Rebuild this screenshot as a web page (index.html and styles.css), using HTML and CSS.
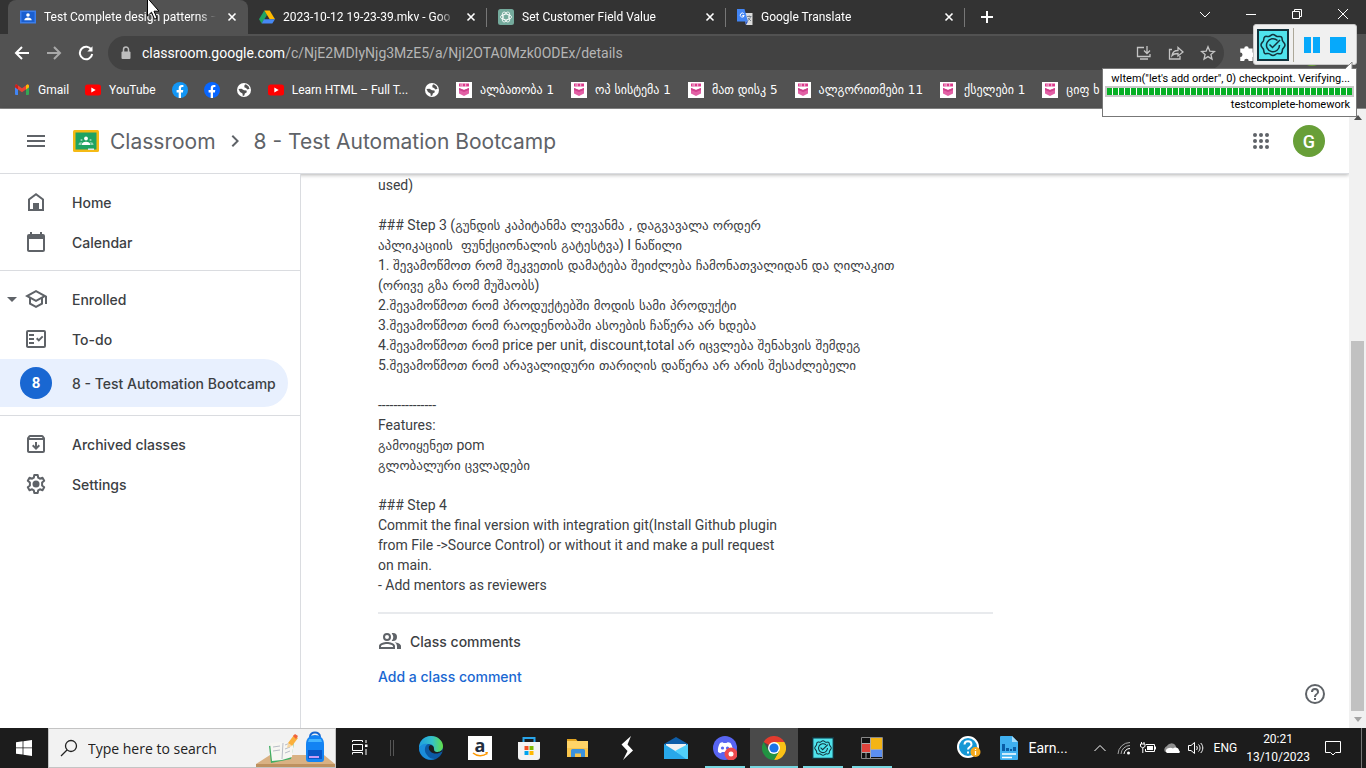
FILE: index.html
```html
<!DOCTYPE html>
<html lang="en">
<head>
<meta charset="utf-8">
<title>Test Complete design patterns</title>
<link rel="stylesheet" href="styles.css">
</head>
<body>
<svg class="defs" aria-hidden="true">
  <symbol id="close" viewBox="0 0 16 16"><path d="M4.500 4.500l7 7M11.500 4.500l-7 7" stroke="currentColor" stroke-width="1.600" fill="none"/></symbol>
  <symbol id="btu" viewBox="0 0 16 16"><path fill="#fff" d="M0 0h16v16H0z"/><path fill="#dc3a8c" d="M3 1.500h10v3H3z"/><path stroke="#fff" stroke-width=".7" d="M6.200 1.500v3M9.700 1.500v3M4 3h1.500"/><path fill="#e260a5" d="M3 6l5 2 5-2v5.500L8 14l-5-2.500z"/><path fill="#cf3f8b" d="M3 6l5 2 5-2v2L8 10 3 8z"/></symbol>
  <symbol id="yt" viewBox="0 0 16 16"><rect y="2.500" width="16" height="11" rx="2.500" fill="#f00"/><path fill="#fff" d="M6.300 5.500v5l4.400-2.500z"/></symbol>
  <symbol id="globe" viewBox="0 0 16 16"><circle cx="8" cy="8" r="7" fill="#fff"/><path fill="#525252" d="M2.500 7l3-.300 2.500 1.500 2.500.300.300 1.800-2 1.200-.500 2-1.500.5-.3-2.500L4 10zM8.500 3l1.300-.800 2.700 2 1 2.600-2 .6-1.500-1.500-1.700-.7z"/></symbol>
  <symbol id="fb" viewBox="0 0 16 16"><circle cx="8" cy="8" r="8" fill="currentColor"/><path fill="#fff" d="M6.700 16v-5.600H4.600V8h2.100V6.200c0-2.100 1.200-3.200 3.100-3.200.9 0 1.600.1 1.600.1v2h-1c-1 0-1.400.6-1.400 1.300V8h2.300l-.4 2.400H9V16z"/></symbol>
  <symbol id="seal" viewBox="0 0 32 32"><path fill="#4fe3ec" stroke="#12333d" stroke-width="2" d="M1 1h30v30H1z"/><g fill="none" stroke="#12333d" stroke-width="1.500"><path stroke-linejoin="round" d="M16 5.500c2 0 2 1.500 4 2s3-.7 4.300.3.500 3 1.400 4.300 2.300 2 2.300 3.900-1.400 2.500-2.300 4 .2 3-1.400 4.300-2.500-.3-4.300.3-2 1.900-4 1.900-2.200-1.300-4-1.900-3 .7-4.300-.3-.5-2.800-1.400-4.300S4 18 4 16s1.400-2.600 2.300-3.900-.1-3.100 1.400-4.300 2.300.2 4.300-.3 2-2 4-2z"/><path d="M20.500 11.500a6.500 6.500 0 1 0 2 4.500"/><path d="M12.500 15.500l3 3L23 11"/></g></symbol>
</svg>

<header class="browser">
  <nav class="tabs" aria-label="Tabs">
    <div class="tab tab-active">
      <svg class="fav" viewBox="0 0 16 16"><path fill="#3b7de9" d="M0 1.500h16v13H0z"/><path fill="#1a5fd0" d="M1.500 3h13v10h-13z"/><circle cx="8" cy="6" r="1.800" fill="#fff"/><path fill="#fff" d="M4.300 11.200c0-3.600 7.400-3.600 7.400 0z"/></svg>
      <button class="tab-title">Test Complete design patterns –</button><button class="icon-btn" aria-label="Close tab"><svg class="fav"><use href="#close"/></svg></button>
    </div>
    <div class="tab">
      <svg class="fav" viewBox="0 0 16 16"><path fill="#1fa463" d="M5.300 1.500L8 6 2.700 14.500 0 10.200z"/><path fill="#ffba00" d="M5.300 1.500h5.400L16 10.200h-5.300z"/><path fill="#4688f4" d="M5 10.200h11l-2.700 4.300H2.700z"/></svg>
      <button class="tab-title">2023-10-12 19-23-39.mkv - Goo</button><button class="icon-btn" aria-label="Close tab"><svg class="fav"><use href="#close"/></svg></button>
    </div>
    <div class="tab">
      <svg class="fav" viewBox="0 0 16 16"><rect width="16" height="16" rx="2.500" fill="#74aa9c"/><g fill="none" stroke="#fff" stroke-width=".8"><ellipse cx="8" cy="8" rx="5.500" ry="2.800"/><ellipse cx="8" cy="8" rx="5.500" ry="2.800" transform="rotate(60 8 8)"/><ellipse cx="8" cy="8" rx="5.500" ry="2.800" transform="rotate(120 8 8)"/></g></svg>
      <button class="tab-title">Set Customer Field Value</button><button class="icon-btn" aria-label="Close tab"><svg class="fav"><use href="#close"/></svg></button>
    </div>
    <div class="tab">
      <svg class="fav" viewBox="0 0 16 16"><path fill="#dcdcdc" d="M6 4h9.500v12H9z"/><path fill="#4285f4" d="M0 0h7.500l3.500 12.500H0z"/><path fill="#2a56c6" d="M8 12.500h3L9 16z"/><path d="M6.800 4.800a2 2 0 1 0 .4 1.700H5.300" stroke="#fff" stroke-width="1" fill="none"/><path d="M10 7.500h4.500M12.200 6.500v1M13.500 7.500c-.3 2-1.500 3.500-3 4.500M11 9l3 3" stroke="#707b85" stroke-width=".9" fill="none"/></svg>
      <button class="tab-title">Google Translate</button><button class="icon-btn" aria-label="Close tab"><svg class="fav"><use href="#close"/></svg></button>
    </div>
    <button class="new-tab" aria-label="New tab"><svg class="fav" viewBox="0 0 16 16"><path d="M8 2v12M2 8h12" stroke="#fff" stroke-width="2"/></svg></button>
    <div class="win-controls">
      <button aria-label="Search tabs"><svg viewBox="0 0 12 12"><path d="M1 4l5 5 5-5"/></svg></button>
      <button aria-label="Minimize"><svg viewBox="0 0 12 12"><path d="M1 6.500h10"/></svg></button>
      <button aria-label="Restore"><svg viewBox="0 0 12 12"><path d="M1.500 3.500h7v7h-7zM3.500 3V1.500h7v7H9"/></svg></button>
      <button aria-label="Close"><svg viewBox="0 0 12 12"><path d="M1 1l10 10M11 1L1 11"/></svg></button>
    </div>
  </nav>
  <div class="toolbar">
    <button class="nav-btn" aria-label="Back"><svg viewBox="0 0 16 16"><path d="M15 8H2M8 2L2 8l6 6"/></svg></button>
    <button class="nav-btn nav-off" aria-label="Forward"><svg viewBox="0 0 16 16"><path d="M1 8h13M8 2l6 6-6 6"/></svg></button>
    <button class="nav-btn" aria-label="Reload"><svg viewBox="0 0 16 16"><path d="M13.500 5A6.200 6.200 0 1 0 14.200 9"/><path d="M14.500 1.200v5.300H9.300z" fill="#fff" stroke="none"/></svg></button>
    <div class="omnibox">
      <svg class="lock" viewBox="0 0 16 16"><rect x="3.500" y="6.500" width="9" height="7.500" rx="1" fill="#bdbdbd"/><path d="M5.500 7V4.500a2.500 2.500 0 0 1 5 0V7" fill="none" stroke="#bdbdbd" stroke-width="1.500"/></svg>
      <a class="url" href="#"><b>classroom.google.com</b>/c/NjE2MDIyNjg3MzE5/a/NjI2OTA0Mzk0ODEx/details</a>
      <button class="omni-btn" aria-label="Install"><svg viewBox="0 0 16 16"><path d="M8 2.500H1.500v9H14V9M4 14h8M11 1v7M8 5.500l3 3 3-3"/></svg></button>
      <button class="omni-btn" aria-label="Share"><svg viewBox="0 0 16 16"><path d="M4 4.500H1.500v9.500H12v-3M4 10.500c.5-3.500 3-5 6-5v-3L15 7l-5 4V8.500c-3 0-4.800.5-6 2z"/></svg></button>
      <button class="omni-btn" aria-label="Bookmark"><svg viewBox="0 0 16 16"><path d="M8 1.800l1.800 4.300 4.700.4-3.600 3 1.100 4.600L8 11.600l-4 2.500 1.100-4.600-3.600-3 4.700-.4z"/></svg></button>
    </div>
    <button class="ext" aria-label="Extensions"><svg viewBox="0 0 16 16"><path fill="#fff" d="M2 4h3.500a2 2 0 1 1 4 0H13v3.500a2 2 0 1 1 0 4V15H9.500a2 2 0 0 0-4 0H2v-3.500a2 2 0 0 0 0-4z"/></svg></button>
    <span class="profile"></span>
  </div>
  <nav class="bookmarks" aria-label="Bookmarks">
    <a href="#"><svg class="fav" viewBox="0 0 16 16"><path fill="#4285f4" d="M1 4l3 2.300V13H2a1 1 0 0 1-1-1z"/><path fill="#34a853" d="M15 4l-3 2.300V13h2a1 1 0 0 0 1-1z"/><path fill="#ea4335" d="M1 4c0-1.300 1.400-1.900 2.400-1.100L8 6.300l4.600-3.400C13.600 2.100 15 2.700 15 4v1.300l-7 5-7-5z"/><path fill="#c5221f" d="M1 4c0-1.300 1.400-1.900 2.400-1.100L4 3.300v4.200L1 5.300z"/><path fill="#fbbc04" d="M15 4c0-1.300-1.400-1.900-2.400-1.100l-.6.400v4.200l3-2.200z"/></svg>Gmail</a>
    <a href="#"><svg class="fav"><use href="#yt"/></svg>YouTube</a>
    <a href="#" aria-label="Facebook"><svg class="fav fb-light"><use href="#fb"/></svg></a>
    <a href="#" aria-label="Facebook"><svg class="fav fb-dark"><use href="#fb"/></svg></a>
    <a href="#" aria-label="Site"><svg class="fav"><use href="#globe"/></svg></a>
    <a href="#"><svg class="fav"><use href="#yt"/></svg>Learn HTML – Full T...</a>
    <a href="#" aria-label="Site"><svg class="fav"><use href="#globe"/></svg></a>
    <a href="#"><svg class="fav"><use href="#btu"/></svg><span class="ka">ალბათობა 1</span></a>
    <a href="#"><svg class="fav"><use href="#btu"/></svg><span class="ka">ოპ სისტემა 1</span></a>
    <a href="#"><svg class="fav"><use href="#btu"/></svg><span class="ka">მათ დისკ 5</span></a>
    <a href="#"><svg class="fav"><use href="#btu"/></svg><span class="ka">ალგორითმები 11</span></a>
    <a href="#"><svg class="fav"><use href="#btu"/></svg><span class="ka">ქსელები 1</span></a>
    <a href="#"><svg class="fav"><use href="#btu"/></svg><span class="ka">ციფ ხ</span></a>
  </nav>
</header>

<div class="viewport">
  <div class="page">
    <header class="app-bar">
      <button class="menu" aria-label="Main menu"><svg class="ico" viewBox="0 0 24 24"><path d="M3 18h18v-2H3zm0-5h18v-2H3zm0-7v2h18V6z"/></svg></button>
      <svg class="logo" viewBox="0 0 26 22"><rect width="26" height="22" rx="1.500" fill="#f5ba15"/><path fill="#1ea362" d="M2.500 2.500h21v17h-21z"/><circle cx="13" cy="8.500" r="1.900" fill="#fff"/><path fill="#fff" d="M8.500 15c0-4.500 9-4.500 9 0z"/><g fill="#8fd1b0"><circle cx="8.500" cy="10" r="1.100"/><circle cx="17.500" cy="10" r="1.100"/><path d="M5.500 15c0-2.500 1.500-3 3.500-2.700L8 15zM20.500 15c0-2.500-1.500-3-3.500-2.700l1 2.700z"/></g><path fill="#e6e6e6" d="M15 18.500h6v1.500h-6z"/></svg>
      <a class="crumb" href="#">Classroom</a>
      <svg class="ico" viewBox="0 0 24 24"><path d="M8.600 16.600L13.200 12 8.600 7.400 10 6l6 6-6 6z"/></svg>
      <a class="crumb" href="#">8 - Test Automation Bootcamp</a>
      <button class="apps" aria-label="Google apps"><svg class="ico" viewBox="0 0 24 24"><circle cx="6" cy="6" r="2"/><circle cx="12" cy="6" r="2"/><circle cx="18" cy="6" r="2"/><circle cx="6" cy="12" r="2"/><circle cx="12" cy="12" r="2"/><circle cx="18" cy="12" r="2"/><circle cx="6" cy="18" r="2"/><circle cx="12" cy="18" r="2"/><circle cx="18" cy="18" r="2"/></svg></button>
      <button class="avatar">G</button>
    </header>
    <div class="columns">
      <nav class="side" aria-label="Classroom">
        <ul>
          <li><a href="#"><svg class="ico" viewBox="0 0 24 24"><path fill="none" stroke="#5f6368" stroke-width="2" d="M5 20V9.500l7-5.300 7 5.300V20z"/><path d="M9 13h6v7H9z"/></svg>Home</a></li>
          <li><a href="#"><svg class="ico" viewBox="0 0 24 24"><path d="M19 4h-1V2h-2v2H8V2H6v2H5a2 2 0 0 0-2 2v14c0 1.100.9 2 2 2h14a2 2 0 0 0 2-2V6a2 2 0 0 0-2-2zm0 16H5V9h14z"/></svg>Calendar</a></li>
        </ul>
        <ul>
          <li class="parent"><svg class="caret" viewBox="0 0 10 5"><path d="M0 0h10L5 5z"/></svg><a href="#"><svg class="ico" viewBox="0 0 24 24"><path d="M12 3L1 9l4 2.200v6L12 21l7-3.800v-6l2-1.100V17h2V9zm6.800 6L12 12.700 5.200 9 12 5.300zM17 16l-5 2.700L7 16v-3.700l5 2.700 5-2.700z"/></svg>Enrolled</a></li>
          <li><a href="#"><svg class="ico" viewBox="0 0 24 24"><path d="M20 3H4a2 2 0 0 0-2 2v14c0 1.100.9 2 2 2h16a2 2 0 0 0 2-2V5a2 2 0 0 0-2-2zm0 16H4V5h16z"/><path d="M19.400 10.100L18 8.700l-3.200 3.200-1.400-1.400-1.400 1.400 2.800 2.800zM5 7h5v2H5zm0 4h5v2H5zm0 4h5v2H5z"/></svg>To-do</a></li>
          <li class="current"><a href="#" aria-current="page"><span class="badge">8</span>8 - Test Automation Bootcamp</a></li>
        </ul>
        <ul>
          <li><a href="#"><svg class="ico" viewBox="0 0 24 24"><path d="M20.500 5.200l-1.300-1.600A1.500 1.500 0 0 0 18 3H6c-.5 0-.9.200-1.200.6L3.500 5.200C3.200 5.600 3 6 3 6.500V19c0 1.100.9 2 2 2h14a2 2 0 0 0 2-2V6.500c0-.5-.2-.9-.5-1.300zM6.200 5h11.600l.8 1H5.400zM5 19V8h14v11z"/><path d="M8 14l4 4 4-4-1.400-1.400-1.600 1.600V10h-2v4.200l-1.600-1.600z"/></svg>Archived classes</a></li>
          <li><a href="#"><svg class="ico" viewBox="0 0 24 24"><path fill="none" stroke="#5f6368" stroke-width="2" stroke-linejoin="round" d="M10.300 3h3.400l.5 2.700 1.700 1 2.600-.9 1.700 2.900-2.100 1.800v2.900l2.100 1.900-1.700 2.900-2.600-.9-1.700 1-.5 2.700h-3.400l-.5-2.700-1.700-1-2.600.9-1.700-2.900 2.100-1.800v-3L3.800 8.700l1.700-2.900 2.600.9 1.700-1z"/><circle cx="12" cy="12" r="3.500"/></svg>Settings</a></li>
        </ul>
      </nav>
      <main class="post">
        <div class="body">used)<br><br>### Step 3 (<span class="ka">გუნდის კაპიტანმა ლევანმა , დაგვავალა ორდერ</span><br><span class="ka">აპლიკაციის&nbsp; ფუნქციონალის გატესტვა</span>) I <span class="ka">ნაწილი</span><br>1. <span class="ka">შევამოწმოთ რომ შეკვეთის დამატება შეიძლება ჩამონათვალიდან და ღილაკით</span><br>(<span class="ka">ორივე გზა რომ მუშაობს</span>)<br>2.<span class="ka">შევამოწმოთ რომ პროდუქტებში მოდის სამი პროდუქტი</span><br>3.<span class="ka">შევამოწმოთ რომ რაოდენობაში ასოების ჩაწერა არ ხდება</span><br>4.<span class="ka">შევამოწმოთ რომ</span> price per unit, discount,total <span class="ka">არ იცვლება შენახვის შემდეგ</span><br>5.<span class="ka">შევამოწმოთ რომ არავალიდური თარიღის დაწერა არ არის შესაძლებელი</span><br><br>---------------<br>Features:<br><span class="ka">გამოიყენეთ</span> pom<br><span class="ka">გლობალური ცვლადები</span><br><br>### Step 4<br>Commit the final version with integration git(Install Github plugin<br>from File -&gt;Source Control) or without it and make a pull request<br>on main.<br>- Add mentors as reviewers</div>
        <section class="comments">
          <h2><svg class="ico" viewBox="0 0 24 24"><path fill-rule="evenodd" d="M9 12a4 4 0 1 0 0-8 4 4 0 0 0 0 8zm0-6a2 2 0 1 1 0 4 2 2 0 0 1 0-4zm0 7c-2.700 0-8 1.300-8 4v3h16v-3c0-2.700-5.300-4-8-4zm6 5H3v-1c0-.7 3.200-2 6-2s6 1.300 6 2z"/><path d="M15 12a4 4 0 0 0 0-8c-.5 0-.9.100-1.300.2a5.900 5.900 0 0 1 0 7.600c.4.100.8.200 1.300.2zM16.700 13.200A4.800 4.800 0 0 1 19 17v3h4v-3c0-2.100-3.300-3.400-6.300-3.800z"/></svg>Class comments</h2>
          <button class="add">Add a class comment</button>
        </section>
        <button class="help" aria-label="Help"><svg class="ico" viewBox="0 0 24 24"><path d="M11 18h2v-2h-2zm1-16a10 10 0 1 0 0 20 10 10 0 0 0 0-20zm0 18a8 8 0 1 1 0-16 8 8 0 0 1 0 16zm0-14a4 4 0 0 0-4 4h2a2 2 0 1 1 4 0c0 2-3 1.800-3 5h2c0-2.200 3-2.500 3-5a4 4 0 0 0-4-4z"/></svg></button>
      </main>
    </div>
  </div>
  <div class="scrollbar"><svg class="arrow" viewBox="0 0 8 5"><path fill="#505050" d="M4 0l4 5H0z"/></svg><span class="thumb"></span><svg class="arrow" viewBox="0 0 8 5"><path fill="#a3a3a3" d="M0 0h8L4 5z"/></svg></div>
</div>

<footer class="taskbar">
  <button class="task" aria-label="Start"><svg class="start" viewBox="0 0 16 16"><path fill="#fff" d="M0 2.200l6.600-.9v6.200H0zM7.400 1.200L16 0v7.500H7.400zM0 8.300h6.600v6.300L0 13.700zM7.400 8.300H16V16l-8.600-1.200z"/></svg></button>
  <label class="search"><svg viewBox="0 0 18 18"><circle cx="11" cy="7" r="5.500" fill="none" stroke="#222" stroke-width="1.300"/><path d="M7 11l-6 6" stroke="#222" stroke-width="1.300"/></svg><input type="text" placeholder="Type here to search" aria-label="Type here to search">
    <svg class="art" viewBox="0 0 79 37"><path fill="#d9b183" d="M14 25h54l11 9H0z"/><path fill="#bd915f" d="M0 34h79v3H0z"/><path fill="#3fae63" d="M13 16l13-2 12-1-3 16-20 4z"/><path fill="#f7f6f2" d="M14 13l11-1 3 1 10-3-2 17-10 3-10 1z"/><path d="M27 13l-1 16M17 17l7-1M17 21l7-1M29 15l5-2M29 19l5-2M29 23l5-2" stroke="#b9bdc6" fill="none"/><path fill="#fbb03b" d="M32 13l6-8 4 3-6 8z"/><path fill="#f0643c" d="M37 6l2-2 3 2-2 3z"/><path fill="#f7d6a0" d="M32 13l4 3-5 2z"/><path d="M54 7c0-6 10-6 10 0" fill="none" stroke="#1766d0" stroke-width="2"/><path fill="#1383f3" d="M50 14c0-12 18-12 18 0v15a3 3 0 0 1-3 3H53a3 3 0 0 1-3-3z"/><path fill="#0a57c8" d="M52 20h14v9H52z"/><path fill="#45b4ff" d="M53 9h12l1 3H52z"/><path fill="#c79af5" d="M53 26h10v2H53z"/></svg>
  </label>
  <button class="task" aria-label="Task view"><svg class="view" viewBox="0 0 16 16"><path d="M.5 2V.500h10V2M.5 4.500h10v6H.5zM.5 14.500v-2h10v2M14 0v3M14 9v6" fill="none" stroke="#fff"/><path fill="#fff" d="M13 4.500h2.500V7H13z"/></svg></button>
  <span class="grip"></span>
  <div class="apps-row">
    <button class="task" aria-label="Edge"><svg viewBox="0 0 24 24"><defs><linearGradient id="eg"><stop stop-color="#1f9fe0"/><stop offset=".55" stop-color="#35c1c9"/><stop offset="1" stop-color="#62df45"/></linearGradient></defs><circle cx="12" cy="12" r="12" fill="#0c59a4"/><path fill="url(#eg)" d="M0 12C0 5 5 0 12 0s12 5 12 10c0 4-3 6-6 6s-4-1-3-3c0-4-3-5-6-5-4 0-7 2-9 4z"/><path fill="#1b8ddb" d="M0 12c2-4 6-5 9-4-4 2-4 8-1 11 2 3 5 4 8 4C8 26 0 20 0 12z"/><path fill="#1c1c1c" d="M15 13c0-3-2-4-3.500-4-2 1-2.500 4 0 6.500 3 3 8 2.500 11.500 0L24 13c-2 3-5 3-6.500 3S15 15 15 13z"/></svg></button>
    <button class="task" aria-label="Amazon"><svg class="amazon" viewBox="0 0 24 24"><path fill="#fff" d="M0 0h24v24H0z"/><text x="12" y="16" text-anchor="middle" class="amz">a</text><path d="M5 17c4 3.500 10 3.500 14 .5" stroke="#f90" stroke-width="1.500" fill="none"/><path fill="#f90" d="M17 16h3l-1 3z"/></svg></button>
    <button class="task" aria-label="Microsoft Store"><svg viewBox="0 0 24 24"><path d="M6.500 6V2h11v4" fill="none" stroke="#29a5ea" stroke-width="2"/><path fill="#f3f3f3" d="M1 6h22v15a3 3 0 0 1-3 3H4a3 3 0 0 1-3-3z"/><path fill="#f25022" d="M7.500 10h4v4h-4z"/><path fill="#7fba00" d="M12.500 10h4v4h-4z"/><path fill="#00a4ef" d="M7.500 15h4v4h-4z"/><path fill="#ffb900" d="M12.500 15h4v4h-4z"/></svg></button>
    <button class="task" aria-label="File Explorer"><svg viewBox="0 0 24 24"><path fill="#e0a321" d="M1 3h9l1.500 2H1z"/><path fill="#ffd467" d="M1 5h21v16H1z"/><path fill="#f8c44b" d="M1 12h21v9H1z"/><path fill="#3a91dd" d="M5 21v-6.500a1.500 1.500 0 0 1 1.500-1.500h11a1.500 1.500 0 0 1 1.500 1.500V21h-4v-3.500H9V21z"/></svg></button>
    <button class="task" aria-label="Shortcut app"><svg viewBox="0 0 24 24"><path fill="#fff" d="M16 0L6.500 8.500l6 6.500L8 24l10-9.500-5.500-6z"/></svg></button>
    <button class="task" aria-label="Mail"><svg viewBox="0 0 24 24"><path fill="#0f5ea8" d="M0 8l12-7 12 7v4H0z"/><path fill="#f2f2f2" d="M2 8h20v6l-10 5-10-5z"/><path fill="#28a8ea" d="M0 8l24 15H0z"/><path fill="#50d0fb" d="M24 8v15H22L11 15z"/></svg></button>
    <button class="task running" aria-label="Discord"><svg viewBox="0 0 24 24"><circle cx="12" cy="12" r="12" fill="#5865f2"/><path fill="#fff" d="M7 7c2-1 3-1 3.500 0h3c.5-1 2-1 4 0 2 3 2.500 6 2 9-2 1.500-3 1.500-3.500 0h-7c-1 1.500-2 1.500-4 0C4.500 12.500 5.500 9.500 7 7z"/><circle cx="9.500" cy="12" r="1.600" fill="#5865f2"/><circle cx="14.500" cy="12" r="1.600" fill="#5865f2"/><circle cx="18" cy="18" r="6.500" fill="#ed4a4e"/><circle cx="18" cy="18" r="2.500" fill="#fff"/></svg></button>
    <button class="task focused" aria-label="Chrome"><svg viewBox="0 0 24 24"><path fill="#e33b2e" d="M12 12L1.600 6A12 12 0 0 1 22.400 6z"/><path fill="#fbc116" d="M12 12V6h10.400A12 12 0 0 1 12 24l5-9z"/><path fill="#229342" d="M1.600 6A12 12 0 0 0 12 24l5.200-9L12 12 6.800 15z"/><circle cx="12" cy="12" r="6" fill="#fff"/><circle cx="12" cy="12" r="4.600" fill="#1a73e8"/></svg></button>
    <button class="task running" aria-label="TestComplete"><svg class="seal-small"><use href="#seal"/></svg></button>
    <button class="task running" aria-label="Orders"><svg viewBox="0 0 24 24"><path fill="#111" stroke="#888" d="M1.500 1.500h21v21h-21z"/><path fill="#e0433c" d="M2 8h8v8H2z"/><path fill="#f3b415" d="M11 2h11v11H11z"/><path fill="#5c8ff0" d="M11 14h11v7H11z"/><path d="M10.500 2v20M2 16.500h8M6 17v5M2 7.500h8M11 13.500h11" stroke="#aaa"/></svg></button>
  </div>
  <div class="tray">
    <button class="tray-help" aria-label="Get help"><svg viewBox="0 0 24 24"><circle cx="11" cy="11" r="10" fill="#1597d5" stroke="#fff" stroke-width="2"/><path d="M7.500 8.500c0-4.500 7-4.500 7 0 0 2.500-3.500 2.500-3.500 5M11 15.500v2" stroke="#fff" stroke-width="2" fill="none"/><circle cx="18.500" cy="16" r="5" fill="#f5a81c"/><path d="M18.500 13v1M18.500 15v4" stroke="#fff" stroke-width="1.300"/></svg></button>
    <button class="news"><svg viewBox="0 0 18 24"><path fill="#3fb0f0" d="M1 0h11l6 6v17a1 1 0 0 1-1 1H1a1 1 0 0 1-1-1V1a1 1 0 0 1 1-1z"/><path fill="#a5dcfa" d="M12 0l6 6h-6z"/><path fill="#0a5da6" d="M2 8h3v7H2zM6 12h3v3H6zM10 13h2v2h-2zM13 11h3v4h-3z"/><path stroke="#fff" stroke-width="1.500" d="M2 18h14M2 21.500h10"/></svg>Earn...</button>
    <button class="tray-ico" aria-label="Show hidden icons"><svg viewBox="0 0 16 16"><path d="M2.500 11L8 5.500l5.500 5.500"/></svg></button>
    <button class="tray-ico" aria-label="Network"><svg viewBox="0 0 16 16"><path stroke="#a9a9a9" d="M2 14A12 12 0 0 1 14 2.500M5 14a9 9 0 0 1 9-8.500"/><path d="M8 14a6 6 0 0 1 6-5.500"/><circle cx="12.500" cy="13" r="1.500" fill="#fff" stroke="none"/></svg></button>
    <button class="tray-ico" aria-label="Battery"><svg viewBox="0 0 16 16"><path d="M6 4.500h8.500v7h-9V9M15.500 6.500v3M1.500 2v2M4 2v2M.5 4h4.500v2.500l-2.200 1.300L.500 6.500zM2.800 8v5"/><path fill="#fff" stroke="none" d="M7 6h6v4H7z"/></svg></button>
    <button class="tray-ico" aria-label="OneDrive"><svg viewBox="0 0 16 16"><path fill="#8f8f8f" stroke="none" d="M1 12a4 4 0 0 1 2-6 5 5 0 0 1 8.500-.5L13 9z"/><path fill="#fff" stroke="none" d="M3 13a2.700 2.700 0 0 1 1-4.800c2-1 4-.5 5 .3 2-2 6-.500 6 2 1.500.8.800 2.500-.5 2.500z"/></svg></button>
    <button class="tray-ico" aria-label="Volume"><svg viewBox="0 0 16 16"><path d="M.5 5.500H3L6.500 2.500v11L3 10.500H.5zM8.500 6c1 1.200 1 2.800 0 4M10.500 4.500c2 2 2 5 0 7M12.700 3c2.800 3 2.800 7 0 10"/></svg></button>
    <button class="lang">ENG</button>
    <button class="clock"><time>20:21</time><time>13/10/2023</time></button>
    <button class="notes" aria-label="Notifications"><svg viewBox="0 0 18 18"><path d="M1.500 2.500h15v11h-5L9 16l-2.500-2.500h-5z"/></svg></button>
    <span class="desktop-edge"></span>
  </div>
</footer>

<aside class="runner">
  <div class="runner-bar">
    <svg class="seal"><use href="#seal"/></svg>
    <span class="runner-sep"></span>
    <button aria-label="Pause"><svg viewBox="0 0 16 16"><path fill="#06a9fb" d="M0 0h7v16H0zM9 0h7v16H9z"/></svg></button>
    <button aria-label="Stop"><svg viewBox="0 0 16 16"><path fill="#06a9fb" d="M0 0h16v16H0z"/></svg></button>
  </div>
  <div class="runner-tip" role="status">
    <svg class="tail" viewBox="0 0 8 8"><path fill="#fff" d="M7 0v8H0z"/><path d="M0 8l7-7v7" stroke="#888" fill="none"/></svg>
    <p>wItem("let's add order", 0) checkpoint. Verifying...</p>
    <div class="progress"></div>
    <p>testcomplete-homework</p>
  </div>
</aside>

<svg class="pointer" viewBox="0 0 12 22"><path fill="#fff" stroke="#000" d="M.500-2v18l4-3.800 3 7 2.500-1-3-7h5z"/></svg>
</body>
</html>
```
FILE: styles.css
```css
* { box-sizing: border-box; }
body {
  margin: 0;
  height: 100vh;
  display: flex;
  flex-direction: column;
  overflow: hidden;
  position: relative;
  font-family: Roboto, "DejaVu Sans", sans-serif;
  font-size: 12px;
  background: #fff;
}
button {
  border: 0;
  padding: 0;
  background: none;
  font: inherit;
  color: inherit;
  display: flex;
  align-items: center;
  justify-content: center;
  flex: none;
}
a { color: inherit; text-decoration: none; }
svg { flex: none; display: block; }
ul, p, h2 { margin: 0; padding: 0; list-style: none; }
.defs { position: absolute; width: 0; height: 0; }
.fav { width: 16px; height: 16px; }
.ka { font-family: "DejaVu Sans", sans-serif; }

/* Browser chrome */
.browser { flex: none; color: #fff; background: #525252; border-bottom: 1px solid #8a8a8a; }
.tabs { display: flex; height: 34px; padding-left: 8px; background: #333; }
.tab {
  display: flex;
  align-items: center;
  flex: 0 1 239px;
  min-width: 0;
  gap: 8px;
  padding: 0 8px 0 11px;
  position: relative;
}
.tab:not(.tab-active)::after {
  content: "";
  position: absolute;
  right: 0;
  top: 8px;
  height: 19px;
  width: 1px;
  background: #777;
}
.tab-active { flex-basis: 240px; padding-left: 12px; background: #525252; border-radius: 8px 8px 0 0; }
.tab-title {
  flex: 1;
  min-width: 0;
  justify-content: flex-start;
  white-space: nowrap;
  mask-image: linear-gradient(to right, #000 90%, transparent);
}
.new-tab { width: 44px; }
.win-controls { display: flex; margin-left: auto; }
.win-controls button { width: 46px; height: 28px; }
.win-controls svg { width: 12px; height: 12px; fill: none; stroke: #fff; }
.toolbar { display: flex; align-items: center; height: 38px; padding: 0 8px; }
.nav-btn { width: 28px; margin-right: 4px; }
.nav-btn svg { width: 16px; height: 16px; fill: none; stroke: #fff; stroke-width: 2; }
.nav-off { opacity: .5; }
.omnibox {
  flex: 1;
  display: flex;
  align-items: center;
  height: 34px;
  margin-left: 4px;
  padding: 0 0 0 8px;
  border-radius: 17px;
  background: #424242;
}
.lock { width: 16px; height: 16px; margin: 0 8px 0 2px; }
.url { flex: 1; font-size: 14px; color: #b5b5b5; }
.url b { font-weight: 400; color: #fff; }
.omni-btn { width: 32px; }
.omni-btn svg { width: 16px; height: 16px; fill: none; stroke: #c4c4c4; stroke-width: 1.3; }
.ext { margin-left: 14px; }
.ext svg { width: 18px; height: 18px; }
.profile { width: 26px; height: 26px; margin: 0 33px 0 43px; border-radius: 50%; background: #689f38; }
.bookmarks { display: flex; align-items: center; gap: 16px; height: 36px; padding: 0 14px; overflow: hidden; }
.bookmarks a { display: flex; align-items: center; gap: 8px; white-space: nowrap; }
.bookmarks .ka { margin-right: 1px; }
.fb-light { color: #1296f5; }
.fb-dark { color: #0866ff; }

/* Web page */
.viewport { flex: 1; min-height: 0; display: flex; }
.page { flex: 1; min-width: 0; display: flex; flex-direction: column; color: #3c4043; font-family: Inter, sans-serif; }
.ico { width: 24px; height: 24px; fill: #5f6368; }
.app-bar {
  flex: none;
  display: flex;
  align-items: center;
  height: 65px;
  padding: 0 24px;
  border-bottom: 1px solid #dadce0;
  box-shadow: 0 1px 4px rgba(0, 0, 0, .3);
}
.logo { width: 26px; height: 22px; margin: 0 11px 0 25px; }
.crumb { font-size: 21px; color: #5f6368; }
.crumb + .ico { margin: 0 7px; }
.apps { margin-left: auto; }
.avatar {
  width: 32px;
  height: 32px;
  margin-left: 20px;
  border-radius: 50%;
  background: #689f38;
  color: #fff;
  font: 500 18px Roboto, sans-serif;
}
.columns { flex: 1; min-height: 0; display: flex; overflow: hidden; }
.side {
  flex: none;
  width: 301px;
  border-right: 1px solid #dadce0;
  background: #fff;
  font-size: 14px;
  font-weight: 500;
  position: relative;
}
.side ul { padding: 8px 0; }
.side ul + ul { border-top: 1px solid #dadce0; }
.side a { display: flex; align-items: center; gap: 24px; height: 40px; padding-left: 24px; }
.side li { position: relative; margin-right: 12px; }
.side .current a { gap: 20px; height: 48px; padding-left: 20px; background: #e8f0fe; border-radius: 0 24px 24px 0; white-space: nowrap; }
.caret { position: absolute; left: 7px; top: 18px; width: 10px; height: 5px; fill: #5f6368; }
.badge {
  width: 32px;
  height: 32px;
  border-radius: 50%;
  background: #1967d2;
  color: #fff;
  font: 700 15px/32px Roboto, sans-serif;
  text-align: center;
}
.post { flex: 1; min-width: 0; padding: 1px 77px 0; position: relative; }
.body { font: 14px/20px Roboto, "DejaVu Sans", sans-serif; white-space: nowrap; }
.body .ka { font-size: 13px; line-height: 1; }
.comments { max-width: 615px; margin-top: 17px; border-top: 2px solid #e8eaed; }
.comments h2 { display: flex; align-items: center; gap: 8px; padding-top: 15px; font-size: 14px; font-weight: 500; }
.add { height: 36px; margin-top: 5px; font-size: 14px; font-weight: 500; color: #1967d2; }
.help { position: absolute; right: 22px; bottom: 22px; }
.scrollbar { flex: none; width: 17px; display: flex; flex-direction: column; align-items: center; padding: 6px 0; background: #f1f1f1; }
.arrow { width: 8px; height: 5px; }
.thumb { width: 13px; height: 61%; margin: auto 0 6px; background: #c1c1c1; }

/* Taskbar */
.taskbar { flex: none; display: flex; height: 40px; background: #1c1c1c; color: #fff; }
.task { width: 48px; border-bottom: 2px solid transparent; padding-top: 2px; }
.task svg { width: 24px; height: 24px; }
.task .start, .task .view { width: 16px; height: 16px; }
.task .seal-small { width: 22px; height: 22px; }
.task .amazon { overflow: visible; }
.amz { font: 700 18px "Open Sans", sans-serif; fill: #232f3e; }
.running { border-bottom-color: #76d6e0; width: 40px; margin: 0 4px; }
.focused { border-bottom-color: #76d6e0; background: #4a4a4a; }
.search { display: flex; align-items: center; width: 288px; padding-left: 11px; background: #f2f2f2; border: 1px solid #c4c4c4; }
.search > svg:first-child { width: 18px; height: 18px; }
.search input {
  flex: 1;
  min-width: 0;
  margin-left: 10px;
  padding: 0;
  border: 0;
  background: none;
  font: 14px "Open Sans", sans-serif;
  color: #222;
}
.search input::placeholder { color: #222; opacity: 1; }
.search .art { width: 79px; height: 37px; }
.grip { width: 4px; height: 16px; margin: 12px 13px 0 6px; border: solid #555; border-width: 0 1px; }
.apps-row { display: flex; gap: 1px; }
.tray { display: flex; margin-left: auto; align-items: stretch; }
.tray-help { width: 26px; margin-right: 18px; }
.tray-help svg { width: 24px; height: 24px; }
.news { gap: 10px; margin-right: 20px; font-size: 14px; }
.news svg { width: 18px; height: 24px; }
.tray-ico { width: 24px; }
.tray-ico svg { width: 16px; height: 16px; fill: none; stroke: #fff; }
.lang { margin: 0 9px 0 6px; }
.clock { flex-direction: column; line-height: 18px; }
.notes { width: 28px; margin: 0 14px 0 9px; }
.notes svg { width: 18px; height: 18px; fill: none; stroke: #fff; }
.desktop-edge { width: 5px; border-left: 1px solid #777; }

/* Test runner overlay */
.runner {
  position: absolute;
  top: 24px;
  right: 9px;
  display: flex;
  flex-direction: column;
  align-items: flex-end;
  gap: 3px;
  color: #000;
  font-size: 11px;
}
.runner-bar { display: flex; align-items: center; gap: 10px; height: 41px; padding: 0 10px 0 3px; border: 1px solid #c8c8c8; border-radius: 3px; background: #f0f0f0; }
.seal { width: 32px; height: 32px; }
.runner-sep { width: 1px; height: 34px; margin-left: -6px; background: #aca899; }
.runner-bar button svg { width: 16px; height: 16px; }
.runner-tip { position: relative; width: 255px; padding: 3px 6px 4px; border: 1px solid #777; background: #fff; text-align: right; line-height: 14px; white-space: nowrap; }
.tail { position: absolute; right: 3px; top: -8px; width: 8px; height: 8px; }
.progress {
  height: 11px;
  margin: 0 -4px 1px;
  border: 2px solid #c9c9c9;
  background: repeating-linear-gradient(to right, #06b025 0 5px, #fff 5px 6px);
}
.pointer { position: absolute; left: 147px; top: 0; width: 12px; height: 22px; }
```
